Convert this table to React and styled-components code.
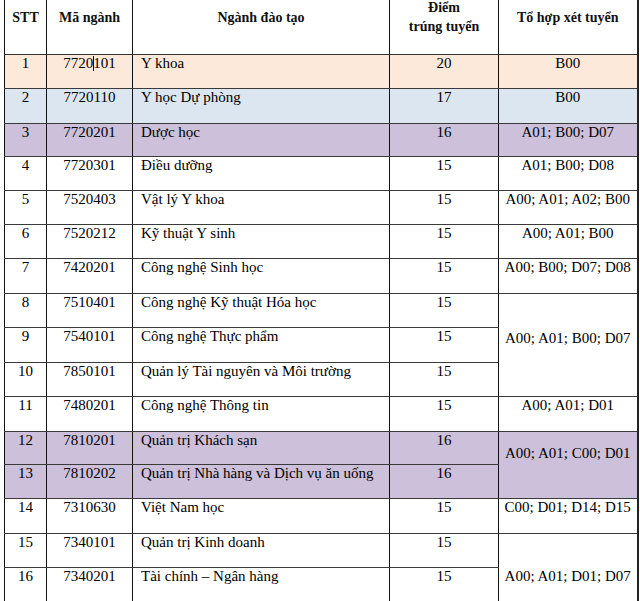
import React from "react";
import styled, { createGlobalStyle } from "styled-components";

const GlobalStyle = createGlobalStyle`
  html, body {
    margin: 0;
    padding: 0;
    background: #ffffff;
  }
  body {
    font-family: "Liberation Serif", "Times New Roman", serif;
    color: #000;
  }
`;

const COLORS = {
  orange: "#fde9d9",
  blue: "#dce6f1",
  purple: "#ccc0da",
};

const Page = styled.div`
  width: 640px;
  height: 601px;
  overflow: hidden;
  padding-left: 4px;
  box-sizing: border-box;
`;

const Table = styled.table`
  width: 633px;
  table-layout: fixed;
  border-collapse: collapse;
  border-left: 1px solid #111;
  border-right: 2px solid #222;
`;

const HeadRow = styled.tr`
  height: 54px;
`;

const HeadCell = styled.th`
  padding: 0 2px;
  vertical-align: middle;
  text-align: center;
  font-size: 14px;
  font-weight: bold;
  line-height: 19px;
  color: #111;
  border-left: 1px solid #111;
  border-bottom: 1px solid #333;
`;

const HeadText = styled.div`
  margin-top: -19px;
`;

const Row = styled.tr`
  height: ${(p) => p.$h}px;
  background: ${(p) => (p.$tone ? COLORS[p.$tone] : "#fff")};
`;

const Cell = styled.td`
  padding: ${(p) => p.$top || 0}px 4px 0 ${(p) => (p.$left ? 8 : 4)}px;
  vertical-align: top;
  text-align: ${(p) => (p.$left ? "left" : "center")};
  font-size: 15px;
  line-height: 17px;
  white-space: nowrap;
  border-left: 1px solid #111;
  border-bottom: 1px solid #3a3a3a;
  background: ${(p) => (p.$tone ? COLORS[p.$tone] : "transparent")};
`;

const Caret = styled.span`
  display: inline-block;
  width: 1px;
  height: 15px;
  background: #000;
  vertical-align: -3px;
  margin: 0 -0.5px;
`;

const ROWS = [
  { stt: 1, code: "7720101", name: "Y khoa", score: 20, combo: "B00", tone: "orange", h: 34, caret: true },
  { stt: 2, code: "7720110", name: "Y học Dự phòng", score: 17, combo: "B00", tone: "blue", h: 35 },
  { stt: 3, code: "7720201", name: "Dược học", score: 16, combo: "A01; B00; D07", tone: "purple", h: 33 },
  { stt: 4, code: "7720301", name: "Điều dưỡng", score: 15, combo: "A01; B00; D08", h: 34 },
  { stt: 5, code: "7520403", name: "Vật lý Y khoa", score: 15, combo: "A00; A01; A02; B00", h: 34 },
  { stt: 6, code: "7520212", name: "Kỹ thuật Y sinh", score: 15, combo: "A00; A01; B00", h: 34 },
  { stt: 7, code: "7420201", name: "Công nghệ Sinh học", score: 15, combo: "A00; B00; D07; D08", h: 35 },
  { stt: 8, code: "7510401", name: "Công nghệ Kỹ thuật Hóa học", score: 15, combo: "A00; A01; B00; D07", span: 3, top: 36, h: 34 },
  { stt: 9, code: "7540101", name: "Công nghệ Thực phẩm", score: 15, h: 35 },
  { stt: 10, code: "7850101", name: "Quản lý Tài nguyên và Môi trường", score: 15, h: 34 },
  { stt: 11, code: "7480201", name: "Công nghệ Thông tin", score: 15, combo: "A00; A01; D01", h: 35 },
  { stt: 12, code: "7810201", name: "Quản trị Khách sạn", score: 16, combo: "A00; A01; C00; D01", span: 2, top: 13, tone: "purple", h: 33 },
  { stt: 13, code: "7810202", name: "Quản trị Nhà hàng và Dịch vụ ăn uống", score: 16, tone: "purple", h: 34 },
  { stt: 14, code: "7310630", name: "Việt Nam học", score: 15, combo: "C00; D01; D14; D15", h: 35 },
  { stt: 15, code: "7340101", name: "Quản trị Kinh doanh", score: 15, combo: "A00; A01; D01; D07", span: 2, top: 34, h: 34 },
  { stt: 16, code: "7340201", name: "Tài chính – Ngân hàng", score: 15, h: 40 },
];

function Code({ value, caret }) {
  if (!caret) return value;
  return (
    <>
      {value.slice(0, 4)}
      <Caret />
      {value.slice(4)}
    </>
  );
}

export default function App() {
  return (
    <>
      <GlobalStyle />
      <Page>
        <Table>
          <colgroup>
            <col style={{ width: 42 }} />
            <col style={{ width: 86 }} />
            <col style={{ width: 257 }} />
            <col style={{ width: 109 }} />
            <col style={{ width: 139 }} />
          </colgroup>
          <thead>
            <HeadRow>
              <HeadCell><HeadText>STT</HeadText></HeadCell>
              <HeadCell><HeadText>Mã ngành</HeadText></HeadCell>
              <HeadCell><HeadText>Ngành đào tạo</HeadText></HeadCell>
              <HeadCell>
                <HeadText>
                  Điểm
                  <br />
                  trúng tuyển
                </HeadText>
              </HeadCell>
              <HeadCell><HeadText>Tổ hợp xét tuyển</HeadText></HeadCell>
            </HeadRow>
          </thead>
          <tbody>
            {ROWS.map((r) => (
              <Row key={r.stt} $tone={r.tone} $h={r.h}>
                <Cell>{r.stt}</Cell>
                <Cell>
                  <Code value={r.code} caret={r.caret} />
                </Cell>
                <Cell $left>{r.name}</Cell>
                <Cell>{r.score}</Cell>
                {r.combo && (
                  <Cell rowSpan={r.span || 1} $top={r.top} $tone={r.tone}>
                    {r.combo}
                  </Cell>
                )}
              </Row>
            ))}
          </tbody>
        </Table>
      </Page>
    </>
  );
}
